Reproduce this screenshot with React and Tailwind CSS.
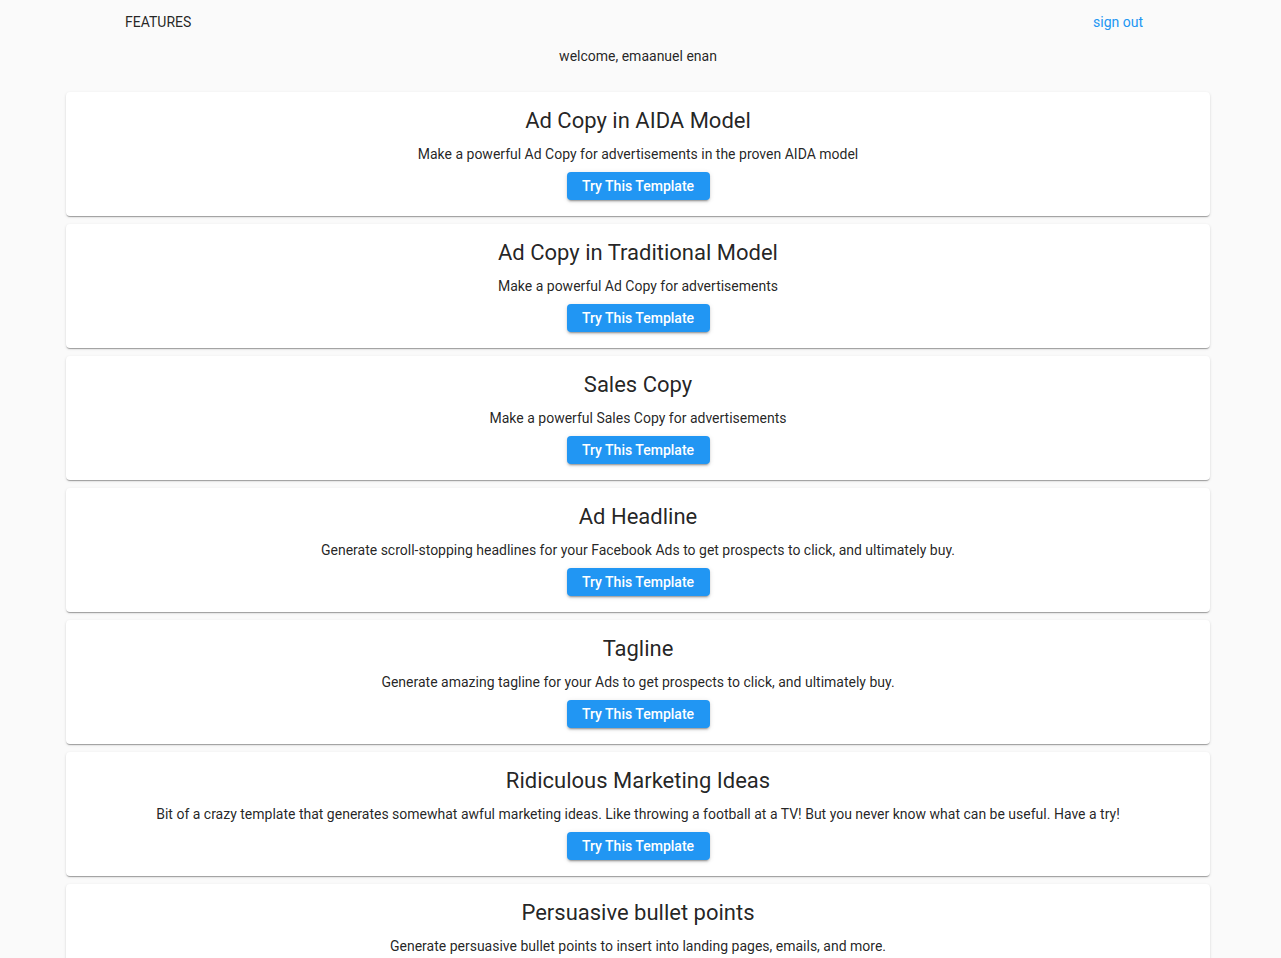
import React from "react";

const items = [
  ["Ad Copy in AIDA Model", "Make a powerful Ad Copy for advertisements in the proven AIDA model"],
  ["Ad Copy in Traditional Model", "Make a powerful Ad Copy for advertisements"],
  ["Sales Copy", "Make a powerful Sales Copy for advertisements"],
  ["Ad Headline", "Generate scroll-stopping headlines for your Facebook Ads to get prospects to click, and ultimately buy."],
  ["Tagline", "Generate amazing tagline for your Ads to get prospects to click, and ultimately buy."],
  ["Ridiculous Marketing Ideas", "Bit of a crazy template that generates somewhat awful marketing ideas. Like throwing a football at a TV! But you never know what can be useful. Have a try!"],
  ["Persuasive bullet points", "Generate persuasive bullet points to insert into landing pages, emails, and more."],
];

export default function App() {
  return (
    <div className="min-h-screen bg-[#fafafa] text-[rgba(0,0,0,0.87)] font-['Roboto',sans-serif]">
      <div className="flex h-[44px] items-center justify-between pl-[125px] pr-[138px] text-[14px]">
        <span className="uppercase">Features</span>
        <span className="text-[#2196f3]">sign out</span>
      </div>
      <div className="mt-[2px] h-[20px] text-center text-[14px] leading-[20px] pr-[5px]">welcome, emaanuel enan</div>
      <div className="ml-[66px] mt-[26px] flex w-[1144px] flex-col gap-[8px] pb-8">
        {items.map(([t, d]) => (
          <div
            key={t}
            className="flex flex-col items-center rounded-[4px] bg-white pt-[13px] pb-[16px] shadow-[0px_2px_1px_-1px_rgba(0,0,0,0.2),0px_1px_1px_0px_rgba(0,0,0,0.14),0px_1px_3px_0px_rgba(0,0,0,0.12)]"
          >
            <div className="h-[32px] text-[22px] leading-[32px]">{t}</div>
            <div className="mt-[7px] h-[20px] text-[14px] leading-[20px]">{d}</div>
            <button className="mt-[8px] flex h-[28px] w-[143px] items-center justify-center rounded-[4px] bg-[#2196f3] text-[14px] font-medium text-white shadow-[0px_3px_1px_-2px_rgba(0,0,0,0.2),0px_2px_2px_0px_rgba(0,0,0,0.14),0px_1px_5px_0px_rgba(0,0,0,0.12)]">
              Try This Template
            </button>
          </div>
        ))}
      </div>
    </div>
  );
}
